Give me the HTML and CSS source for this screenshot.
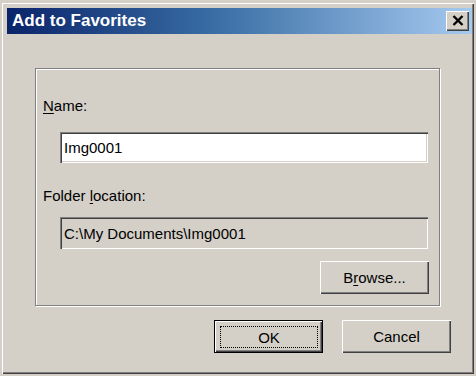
FILE: index.html
```html
<!DOCTYPE html>
<html>
<head>
<meta charset="utf-8">
<link rel="stylesheet" href="styles.css">
</head>
<body>
<div class="window">
  <div class="titlebar">
    <span class="title">Add to Favorites</span>
    <div class="close">
      <svg width="12" height="11" viewBox="0 0 12 11"><path d="M1.5 1 L10.5 10 M10.5 1 L1.5 10" stroke="#000" stroke-width="2.4" fill="none"/></svg>
    </div>
  </div>
  <div class="content">
    <div class="group">
      <div class="label label-name"><u>N</u>ame:</div>
      <div class="field">Img0001</div>
      <div class="label label-folder">Folder <u>l</u>ocation:</div>
      <div class="field readonly">C:\My Documents\Img0001</div>
      <div class="browse-row"><div class="btn">B<u>r</u>owse...</div></div>
    </div>
    <div class="actions">
      <div class="btn default"><span class="focus">OK</span></div>
      <div class="btn">Cancel</div>
    </div>
  </div>
</div>
</body>
</html>
```

FILE: styles.css
```css
html, body {
  margin: 0;
  padding: 0;
  background: #d4d0c8;
}
body {
  width: 476px;
  height: 376px;
  overflow: hidden;
  font-family: "Liberation Sans", Arial, sans-serif;
  font-size: 15px;
  color: #000;
}
.window {
  margin: 2px 0 0 1px;
  width: 473px;
  height: 372px;
  box-sizing: border-box;
  padding: 6px 2px 0 6px;
  background: #d4d0c8;
  box-shadow: inset 1px 1px #d4d0c8, inset 2px 2px #ffffff, inset -1px -1px #404040, inset -2px -2px #808080;
  display: flex;
  flex-direction: column;
}
.titlebar {
  height: 26px;
  background: linear-gradient(to right, #0a246a 0%, #3a6ea5 45%, #a6caf0 100%);
  display: flex;
  align-items: center;
  justify-content: space-between;
  padding: 0 3px 0 5px;
}
.title {
  color: #fff;
  font-weight: bold;
  font-size: 17px;
  line-height: 20px;
}
.close {
  width: 23px;
  height: 20px;
  box-sizing: border-box;
  background: #d4d0c8;
  box-shadow: inset 1px 1px #ffffff, inset -1px -1px #404040, inset -2px -2px #808080;
  display: flex;
  align-items: center;
  justify-content: center;
  padding-bottom: 1px;
}
.content {
  padding: 34px 32px 0 28px;
  display: flex;
  flex-direction: column;
}
.group {
  border: 1px solid #808080;
  box-shadow: inset 1px 1px #ffffff, 1px 1px #ffffff;
  padding: 28px 11px 11px 7px;
  height: 238px;
  box-sizing: border-box;
  display: flex;
  flex-direction: column;
}
.label {
  line-height: 17px;
}
.label-folder {
  margin-top: 24px;
}
.field {
  margin-top: 18px;
  margin-left: 17px;
  height: 31px;
  box-sizing: border-box;
  background: #fff;
  padding: 0 4px;
  display: flex;
  align-items: center;
  box-shadow: inset 1px 1px #808080, inset 2px 2px #404040, inset -1px -1px #ffffff, inset -2px -2px #d4d0c8;
}
.field.readonly {
  margin-top: 13px;
  height: 32px;
  background: #d4d0c8;
}
.browse-row {
  margin-top: 12px;
  margin-right: -1px;
  display: flex;
  justify-content: flex-end;
}
.btn {
  width: 109px;
  height: 33px;
  box-sizing: border-box;
  background: #d4d0c8;
  display: flex;
  align-items: center;
  justify-content: center;
  box-shadow: inset 1px 1px #ffffff, inset -1px -1px #404040, inset -2px -2px #808080;
}
.actions {
  margin-top: 14px;
  margin-right: -11px;
  display: flex;
  justify-content: flex-end;
  gap: 19px;
}
.btn.default {
  border: 1px solid #000;
  align-items: stretch;
  padding: 5px 4px 4px 5px;
  box-shadow: inset 1px 1px #ffffff, inset -1px -1px #404040, inset -2px -2px #808080;
}
.focus {
  flex: 1;
  border: 1px dotted #000;
  display: flex;
  align-items: center;
  justify-content: center;
}
u {
  text-decoration: underline;
  text-underline-offset: 2px;
}
```
